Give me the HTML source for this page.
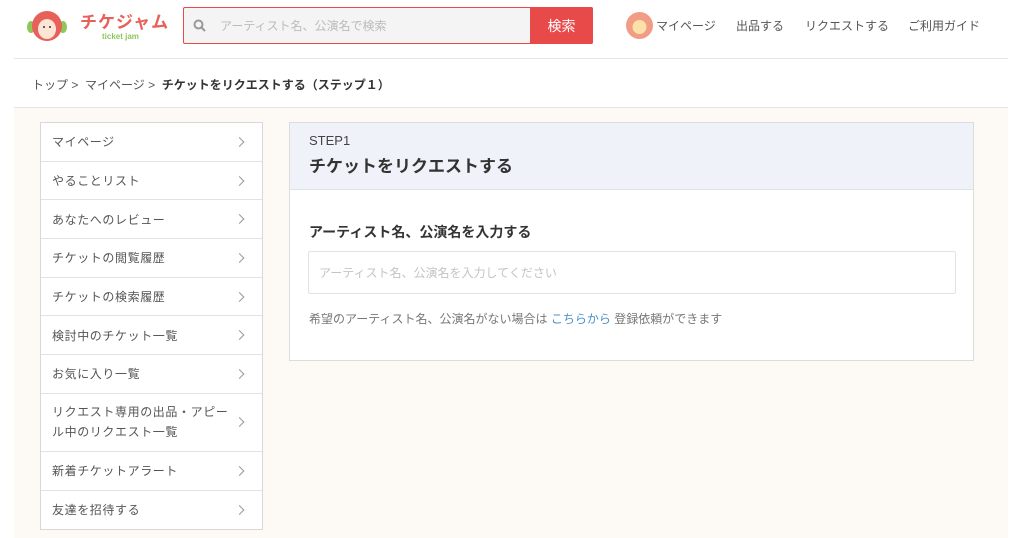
<!DOCTYPE html>
<html><head><meta charset="utf-8"><style>
*{margin:0;padding:0;box-sizing:border-box}
body{width:1024px;height:538px;background:#fff;font-family:"Liberation Sans","Noto Sans CJK JP",sans-serif;position:relative;overflow:hidden;color:#333}
.a{position:absolute}
.nav{font-size:12px;color:#555;top:17px}
.side{left:40px;top:122px;width:223px;border:1px solid #d8d8d8;background:#fff}
.side div{border-bottom:1px solid #e2e2e2;font-size:12px;color:#555;padding:0 30px 0 11px;height:38.7px;display:flex;align-items:center;position:relative;letter-spacing:0.6px;white-space:nowrap}
.side div:last-child{border-bottom:none}
.side div::after{content:"";position:absolute;right:19px;top:50%;width:6px;height:6px;border-top:1px solid #999;border-right:1px solid #999;transform:translateY(-50%) rotate(45deg)}
</style></head><body>
<svg class="a" style="left:26px;top:9px" width="42" height="34" viewBox="0 0 42 34">
<ellipse cx="5" cy="18" rx="4" ry="6" fill="#8fc65a"/><ellipse cx="37" cy="18" rx="4" ry="6" fill="#8fc65a"/>
<circle cx="21" cy="17" r="15" fill="#e8605a"/><ellipse cx="21" cy="20" rx="9" ry="10" fill="#fbe6d6"/>
<circle cx="18" cy="18" r="1" fill="#333"/><circle cx="24" cy="18" r="1" fill="#333"/></svg>
<div class="a" style="left:80px;top:8px;font-size:17px;font-weight:bold;color:#e8605a;letter-spacing:1px">チケジャム</div>
<div class="a" style="left:102px;top:32px;font-size:8px;font-weight:bold;color:#8fc65a">ticket jam</div>
<div class="a" style="left:183px;top:7px;width:410px;height:37px;border:1.5px solid #e84a4a;background:#f4f4f4;border-radius:2px"></div>
<svg class="a" style="left:193px;top:19px" width="13" height="13" viewBox="0 0 13 13"><circle cx="5.5" cy="5.5" r="4" stroke="#999" stroke-width="2" fill="none"/><path d="M8.5 8.5L12 12" stroke="#999" stroke-width="2"/></svg>
<div class="a" style="left:220px;top:17px;font-size:12px;color:#bbb">アーティスト名、公演名で検索</div>
<div class="a" style="left:530px;top:7px;width:63px;height:37px;background:#e84a4a;color:#fff;font-size:14px;display:flex;align-items:center;justify-content:center;border-radius:0 2px 2px 0">検索</div>
<svg class="a" style="left:626px;top:12px" width="27" height="27"><circle cx="13.5" cy="13.5" r="13.5" fill="#f29b85"/><circle cx="13.5" cy="15" r="7" fill="#fbe0a8"/></svg>
<div class="a nav" style="left:656px">マイページ</div>
<div class="a nav" style="left:736px">出品する</div>
<div class="a nav" style="left:805px">リクエストする</div>
<div class="a nav" style="left:908px">ご利用ガイド</div>
<div class="a" style="left:14px;top:58px;width:994px;height:1px;background:#e6e6e6"></div>
<div class="a" style="left:32px;top:76px;font-size:12px;color:#555">トップ &gt; &nbsp;マイページ &gt; &nbsp;<b style="color:#333">チケットをリクエストする（ステップ１）</b></div>
<div class="a" style="left:14px;top:107px;width:994px;height:1px;background:#e6e6e6"></div>
<div class="a" style="left:14px;top:108px;width:994px;height:430px;background:#fdf9f4"></div>
<div class="a side">
<div>マイページ</div><div>やることリスト</div><div>あなたへのレビュー</div><div>チケットの閲覧履歴</div><div>チケットの検索履歴</div><div>検討中のチケット一覧</div><div>お気に入り一覧</div>
<div style="height:58px;line-height:20px"><span>リクエスト専用の出品・アピー<br>ル中のリクエスト一覧</span></div>
<div>新着チケットアラート</div><div>友達を招待する</div></div>
<div class="a" style="left:289px;top:122px;width:685px;height:239px;border:1px solid #dcdcdc;background:#fff">
<div style="height:67px;background:#eff3f9;border-bottom:1px solid #dde2ea;padding:10px 0 0 19px">
<div style="font-size:13px;color:#444">STEP1</div>
<div style="font-size:17px;font-weight:bold;color:#333;margin-top:4px">チケットをリクエストする</div></div>
<div style="position:absolute;left:19px;top:99px;font-size:14px;font-weight:bold;color:#333">アーティスト名、公演名を入力する</div>
<div style="position:absolute;left:18px;top:128px;width:648px;height:43px;border:1px solid #e2e2e2;border-radius:2px;font-size:12px;color:#c4c4c4;padding:12px 10px">アーティスト名、公演名を入力してください</div>
<div style="position:absolute;left:19px;top:187px;font-size:12px;color:#777">希望のアーティスト名、公演名がない場合は <span style="color:#4a90c8">こちらから</span> 登録依頼ができます</div>
</div>
</body></html>
